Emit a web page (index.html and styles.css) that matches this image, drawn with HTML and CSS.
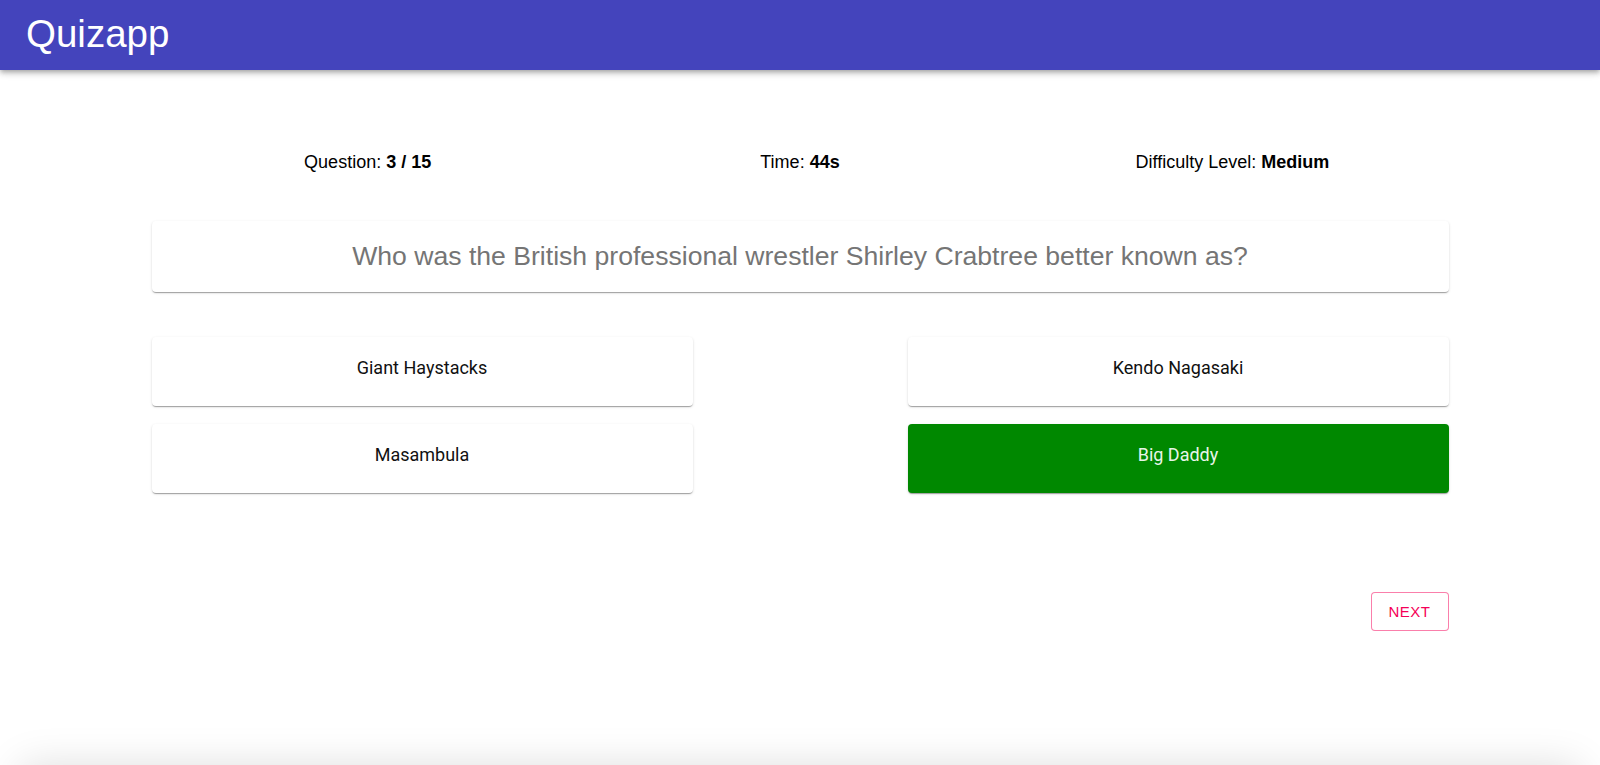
FILE: index.html
```html
<!DOCTYPE html>
<html lang="en">
<head>
<meta charset="utf-8">
<title>Quizapp</title>
<link rel="stylesheet" href="styles.css">
</head>
<body>
<header class="appbar">
  <h1 class="brand">Quizapp</h1>
</header>
<main class="main">
  <div class="container">
    <div class="stats">
      <div class="stat">Question: <b>3 / 15</b></div>
      <div class="stat">Time: <b>44s</b></div>
      <div class="stat">Difficulty Level: <b>Medium</b></div>
    </div>
    <div class="question-card">Who was the British professional wrestler Shirley Crabtree better known as?</div>
    <div class="answers">
      <button class="answer">Giant Haystacks</button>
      <button class="answer">Kendo Nagasaki</button>
      <button class="answer">Masambula</button>
      <button class="answer answer-correct">Big Daddy</button>
    </div>
    <div class="actions">
      <button class="next">NEXT</button>
    </div>
  </div>
</main>
<footer class="footer"></footer>
</body>
</html>
```
FILE: styles.css
```css
html, body {
  margin: 0;
  padding: 0;
  overflow: hidden;
  background: #fff;
}
body {
  font-family: "Liberation Sans", Arial, sans-serif;
  color: #000;
}
.appbar {
  height: 70px;
  background: #4444bc;
  display: flex;
  align-items: center;
  padding: 0 26px;
  box-shadow: 0px 2px 4px -1px rgba(0,0,0,0.2), 0px 4px 5px 0px rgba(0,0,0,0.14), 0px 1px 10px 0px rgba(0,0,0,0.12);
  position: relative;
  z-index: 2;
}
.brand {
  margin: 0;
  color: #fff;
  font-weight: 400;
  font-size: 38.5px;
  line-height: 1;
  margin-top: -1px;
}
.main {
  height: 695px;
  box-sizing: border-box;
  padding-top: 80px;
}
.container {
  width: 1297px;
  margin: 0 auto;
}
.stats {
  display: grid;
  grid-template-columns: 1fr 1fr 1fr;
  height: 24px;
  line-height: 24px;
  font-size: 18px;
  text-align: center;
}
.question-card {
  margin-top: 47px;
  height: 71px;
  display: flex;
  align-items: center;
  justify-content: center;
  border-radius: 4px;
  background: #fff;
  color: #757575;
  font-size: 26.6px;
  box-shadow: 0px 2px 1px -1px rgba(0,0,0,0.2), 0px 1px 1px 0px rgba(0,0,0,0.14), 0px 1px 3px 0px rgba(0,0,0,0.12);
}
.answers {
  margin-top: 45px;
  display: grid;
  grid-template-columns: 541px 541px;
  justify-content: space-between;
  row-gap: 18px;
}
.answer {
  height: 69px;
  padding: 0 0 8px;
  border: 0;
  border-radius: 4px;
  background: #fff;
  font-family: Roboto, "Liberation Sans", sans-serif;
  font-size: 18px;
  color: #111;
  box-shadow: 0px 2px 1px -1px rgba(0,0,0,0.2), 0px 1px 1px 0px rgba(0,0,0,0.14), 0px 1px 3px 0px rgba(0,0,0,0.12);
  cursor: pointer;
}
.answer-correct {
  background: #008800;
  color: #e8f5e9;
}
.actions {
  margin-top: 99px;
  display: flex;
  justify-content: flex-end;
}
.next {
  width: 78px;
  height: 39px;
  border: 1px solid rgba(245, 0, 87, 0.5);
  border-radius: 4px;
  background: #fff;
  color: #f50057;
  font-family: "Liberation Sans", Arial, sans-serif;
  font-size: 15px;
  letter-spacing: 0.5px;
  cursor: pointer;
}
.footer {
  height: 60px;
  margin: 0 20px;
  background: #fff;
  border-radius: 8px;
  box-shadow: 0 0 40px rgba(0,0,0,0.13);
}
```
